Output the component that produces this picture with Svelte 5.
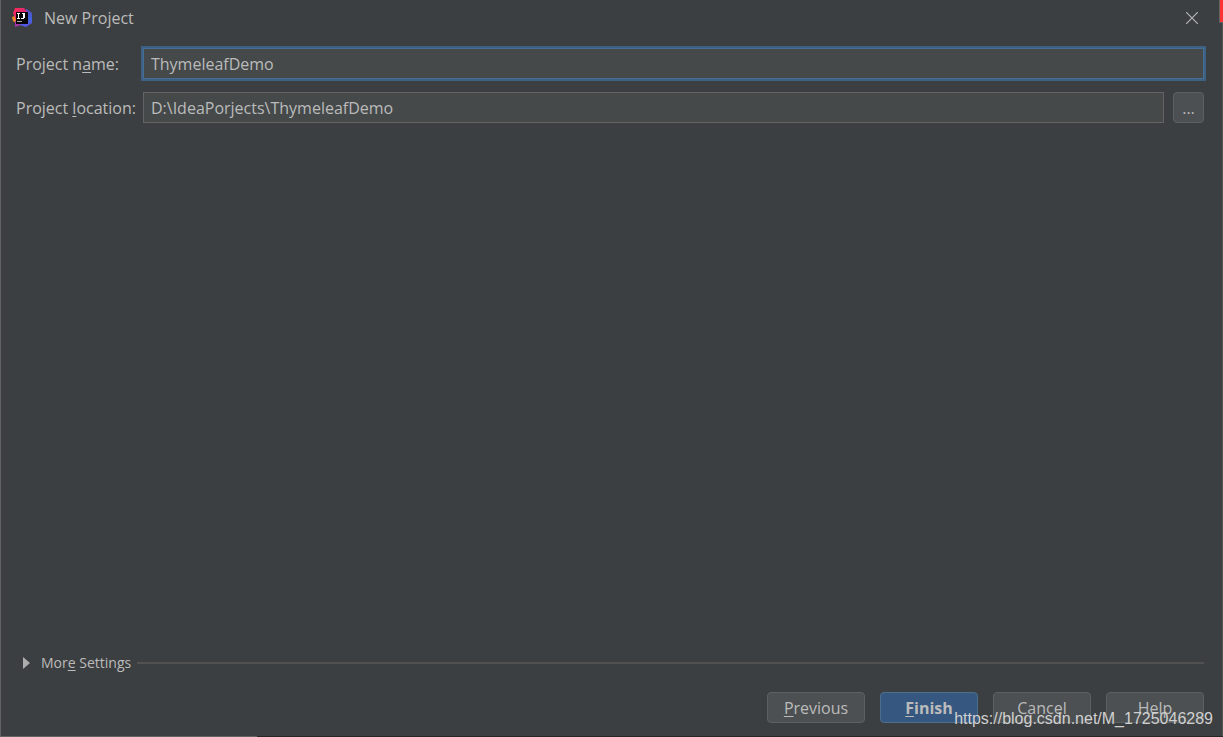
<script lang="ts">
	let projectName = $state('ThymeleafDemo');
	let projectLocation = $state('D:\\IdeaPorjects\\ThymeleafDemo');
</script>

<div class="screen">
	<main class="dialog">
		<header>
			<svg class="logo" width="20" height="20" viewBox="0 0 20 20" aria-hidden="true">
				<defs>
					<linearGradient id="pink" x1="0" y1="0" x2="1" y2="1">
						<stop offset="0" stop-color="#fe2857" />
						<stop offset="1" stop-color="#c22d88" />
					</linearGradient>
					<linearGradient id="blue" x1="0" y1="0" x2="0" y2="1">
						<stop offset="0" stop-color="#5d4bb8" />
						<stop offset="0.5" stop-color="#3f62dc" />
						<stop offset="1" stop-color="#5a55e8" />
					</linearGradient>
				</defs>
				<path fill="#f58529" d="M0 9 5 7v9l-4-3z" />
				<path fill="#a334a5" d="M3 13h9l-3 4-6 2z" />
				<path fill="url(#blue)" d="M11 3 15 1l5 4v10l-6 4-6-2z" />
				<path fill="url(#pink)" d="M3 0h9l3 4-4 8H4L1 5z" />
				<path fill="#080508" d="M4 4h12v12H4z" />
				<path
					fill="#fff"
					d="M5 5h3v1H7v4h1v1H5v-1h1V6H5zM10 5h3v5h-1v1H9v-1h2V6h-1z"
				/>
				<path fill="#aaa" d="M5 13h5v1H5z" />
			</svg>
			<h1>New Project</h1>
			<button class="close" aria-label="Close">
				<svg width="12" height="12" viewBox="0 0 12 12" aria-hidden="true">
					<path fill="none" stroke="#b4b6b7" stroke-width="1.200" d="m0 0 12 12M12 0 0 12" />
				</svg>
			</button>
		</header>

		<form>
			<label for="name">Project n<u>a</u>me:</label>
			<div class="field">
				<input id="name" class="active" type="text" spellcheck="false" bind:value={projectName} />
			</div>

			<label for="location">Project <u>l</u>ocation:</label>
			<div class="field">
				<input id="location" type="text" spellcheck="false" bind:value={projectLocation} />
				<button type="button" class="browse" aria-label="Browse">...</button>
			</div>
		</form>

		<button class="more">
			<svg width="7" height="12" viewBox="0 0 7 12" aria-hidden="true">
				<path fill="#adadad" d="M0 0 7 6 0 12z" />
			</svg>
			<span>Mor<u>e</u> Settings</span>
			<span class="line"></span>
		</button>

		<footer>
			<button><u>P</u>revious</button>
			<button class="primary"><u>F</u>inish</button>
			<button>Cancel</button>
			<button>Help</button>
		</footer>
	</main>
	<div class="behind"></div>
	<div class="watermark">https://blog.csdn.net/M_1725046289</div>
</div>

<style>
	:global(body) {
		margin: 0;
		background: #2b2b2b;
	}

	.screen {
		position: relative;
		box-sizing: border-box;
		min-height: 100vh;
		display: flex;
		padding: 0 1px 1px;
		background:
			linear-gradient(90deg, #646464 21%, #292627 21%) bottom / 100% 1px no-repeat,
			linear-gradient(90deg, #646464 50%, #555 50%);
		font-family: 'Open Sans', 'Noto Sans', sans-serif;
		font-size: 16px;
		line-height: 20px;
		color: #bbb;
	}

	.dialog {
		flex: 1;
		display: flex;
		flex-direction: column;
		background: #3c3f41;
	}

	header {
		display: flex;
		align-items: center;
		height: 36px;
		padding: 0 24px 0 11px;
	}

	h1 {
		flex: 1;
		margin: 0 0 0 12px;
		font-size: 16px;
		font-weight: 400;
	}

	button,
	input {
		box-sizing: border-box;
		font: inherit;
		color: inherit;
		outline: none;
	}

	.close {
		display: flex;
		padding: 0;
		border: none;
		background: none;
	}

	form {
		display: grid;
		grid-template-columns: auto 1fr;
		align-items: center;
		gap: 13px 7px;
		padding: 12px 18px 0 15px;
	}

	u {
		text-decoration-thickness: 1px;
		text-underline-offset: 2px;
	}

	.field {
		display: flex;
		gap: 9px;
	}

	input {
		flex: 1;
		min-width: 0;
		height: 31px;
		padding: 0 7px;
		border: 1px solid #646464;
		border-radius: 0;
		background: #45494a;
	}

	input.active {
		border-color: #466d94;
		box-shadow: 0 0 0 2px #3d6185;
	}

	.browse,
	footer button {
		height: 31px;
		padding: 0;
		border: 1px solid #5e6060;
		border-radius: 4px;
		background: #4c5052;
	}

	.browse {
		width: 31px;
	}

	.more {
		display: flex;
		align-items: center;
		margin: auto 18px 19px 22px;
		padding: 0;
		border: none;
		background: none;
		font-size: 14px;
		text-align: left;
	}

	.more svg {
		margin-right: 11px;
	}

	.line {
		flex: 1;
		height: 2px;
		margin-left: 6px;
		background: #515151;
	}

	footer {
		display: flex;
		justify-content: flex-end;
		gap: 15px;
		padding: 0 18px 13px;
	}

	footer button {
		width: 98px;
	}

	footer .primary {
		border-color: #4c708c;
		background: #365880;
		font-weight: 700;
	}

	/* close button of the window behind, peeking past the dialog corner */
	.behind {
		position: absolute;
		top: 0;
		right: 0;
		width: 3px;
		height: 22px;
		border-left: 1px solid #646464;
		border-bottom: 1px solid #646464;
		border-bottom-left-radius: 2px;
		background: #f33;
	}

	/* stamped over the dialog buttons */
	.watermark {
		position: absolute;
		right: 10px;
		bottom: 8px;
		font-family: 'Liberation Sans', Arial, sans-serif;
		color: #d0d0d0;
		pointer-events: none;
	}
</style>
